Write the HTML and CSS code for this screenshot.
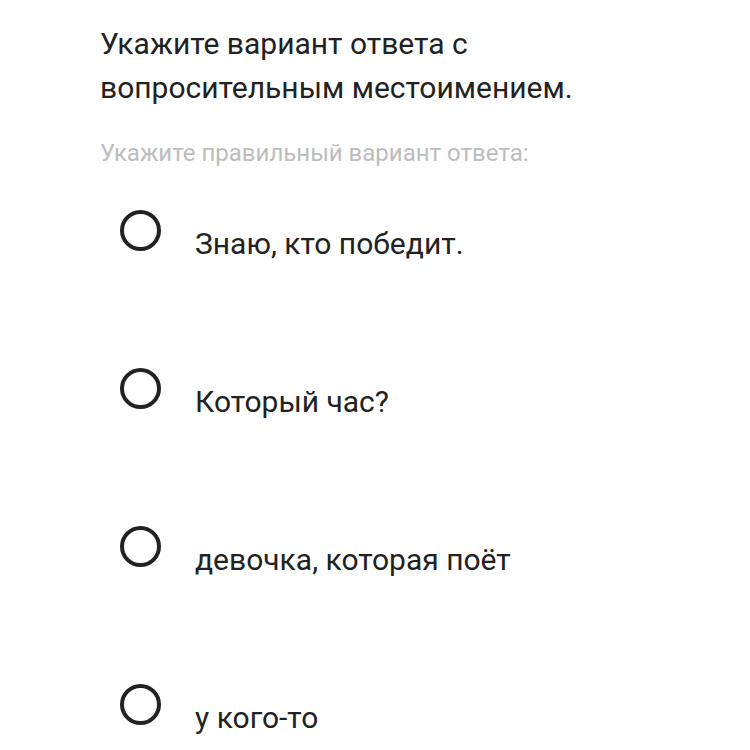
FILE: index.html
```html
<!DOCTYPE html>
<html lang="ru">
<head>
  <meta charset="UTF-8">
  <meta name="viewport" content="width=device-width, initial-scale=1.0">
  <title>Вопрос</title>
  <link rel="stylesheet" href="styles.css">
</head>
<body>
  <div class="question">
    <h1>Укажите вариант ответа с вопросительным местоимением.</h1>
    <p class="hint">Укажите правильный вариант ответа:</p>
    <ul class="options">
      <li><span class="radio"></span><span class="label">Знаю, кто победит.</span></li>
      <li><span class="radio"></span><span class="label">Который час?</span></li>
      <li><span class="radio"></span><span class="label">девочка, которая поёт</span></li>
      <li><span class="radio"></span><span class="label">у кого-то</span></li>
    </ul>
  </div>
</body>
</html>
```

FILE: styles.css
```css
body {
  margin: 0;
  background: #fff;
  font-family: Roboto, "Noto Sans", sans-serif;
  color: #222;
  overflow: hidden;
}

.question {
  padding: 22px 40px 0 100px;
}

h1 {
  margin: 0;
  width: 500px;
  font-size: 30px;
  font-weight: 400;
  line-height: 44px;
  color: #222;
}

.hint {
  margin: 28px 0 0;
  font-size: 24px;
  line-height: 30px;
  color: #bdbdbd;
}

.options {
  list-style: none;
  margin: 42px 0 0;
  padding: 0 0 0 20px;
}

.options li {
  display: flex;
  align-items: flex-start;
  height: 158px;
}

.radio {
  flex: none;
  width: 33px;
  height: 33px;
  border: 4px solid #222;
  border-radius: 50%;
}

.label {
  margin-left: 34px;
  padding-top: 16px;
  font-size: 30px;
  line-height: 36px;
}
```
